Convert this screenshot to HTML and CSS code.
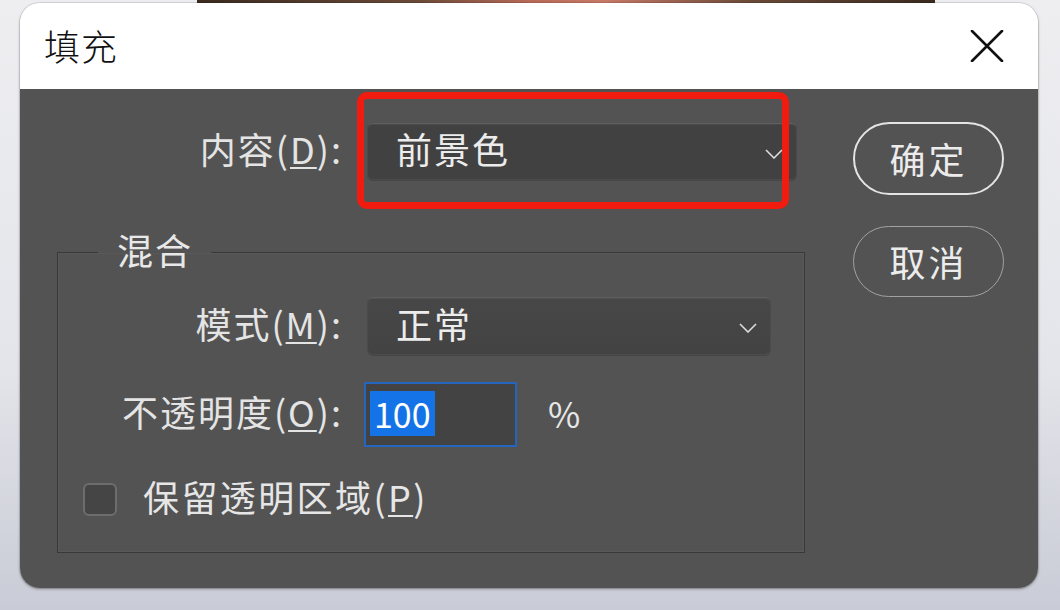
FILE: index.html
```html
<!DOCTYPE html>
<html lang="zh-CN">
<head>
<meta charset="utf-8">
<title>填充</title>
<link rel="stylesheet" href="styles.css">
</head>
<body>
<div class="strip"></div>
<div class="dialog">
  <div class="titlebar">
    <span class="title">填充</span>
    <svg class="close" width="34" height="32" viewBox="0 0 34 32" aria-label="关闭">
      <path d="M2 1 L32 31 M32 1 L2 31" stroke="#111" stroke-width="2.6" fill="none" stroke-linecap="round"/>
    </svg>
  </div>
  <div class="panel">
    <div class="main">
      <div class="row content-row">
        <label class="lbl lbl-content">内容(<u>D</u>):</label>
        <div class="select select-content">
          <span>前景色</span>
          <svg class="chev" width="18" height="10" viewBox="0 0 18 10"><path d="M1 1 L9 9 L17 1" stroke="#dcdcdc" stroke-width="1.6" fill="none"/></svg>
        </div>
        <div class="redbox"></div>
      </div>
      <fieldset class="group">
        <legend>混合</legend>
        <div class="row mode-row">
          <label class="lbl">模式(<u>M</u>):</label>
          <div class="select select-mode">
            <span>正常</span>
            <svg class="chev" width="18" height="10" viewBox="0 0 18 10"><path d="M1 1 L9 9 L17 1" stroke="#dcdcdc" stroke-width="1.6" fill="none"/></svg>
          </div>
        </div>
        <div class="row opacity-row">
          <label class="lbl">不透明度(<u>O</u>):</label>
          <div class="input"><span class="sel">100</span></div>
          <span class="pct">%</span>
        </div>
        <div class="row check-row">
          <span class="checkbox"></span>
          <label class="lbl-check">保留透明区域(<u>P</u>)</label>
        </div>
      </fieldset>
    </div>
    <div class="side">
      <div class="btn btn-ok">确定</div>
      <div class="btn btn-cancel">取消</div>
    </div>
  </div>
</div>
</body>
</html>
```
FILE: styles.css
```css
* { box-sizing: border-box; }
html, body { margin: 0; padding: 0; }
body {
  width: 1060px;
  height: 610px;
  overflow: hidden;
  background: linear-gradient(180deg, #eeeef1 0%, #e4e5ea 60%, #c9cbd6 100%);
  font-family: "Noto Sans CJK SC", "Noto Sans", sans-serif;
}
.strip {
  margin-left: 197px;
  width: 738px;
  height: 3px;
  background: linear-gradient(90deg, #3a2a20 0%, #6b4a38 30%, #b86a58 45%, #c87a68 55%, #6b4a38 75%, #3a2a20 100%);
}
.dialog {
  margin-left: 20px;
  width: 1018px;
  height: 585px;
  border-radius: 20px;
  overflow: hidden;
  display: flex;
  flex-direction: column;
  box-shadow: 0 1px 3px rgba(0,0,0,0.35), 0 0 0 1px rgba(0,0,0,0.08);
}
.titlebar {
  height: 86px;
  flex: none;
  background: #ffffff;
  display: flex;
  align-items: center;
  justify-content: space-between;
  padding: 0 34px 0 24px;
}
.title {
  font-size: 36px;
  font-weight: 300;
  color: #111;
  line-height: 1;
  letter-spacing: 1px;
  padding-bottom: 2px;
}
.close { display: block; }
.panel {
  flex: 1;
  background: #535353;
  display: flex;
  color: #e6e6e6;
}
.main {
  padding-left: 37px;
  width: 785px;
}
.row {
  display: flex;
  align-items: center;
}
.lbl {
  width: 285px;
  text-align: right;
  font-size: 36px;
  letter-spacing: 2px;
  line-height: 1;
  color: #e4e4e4;
  padding-bottom: 7px;
}
.lbl u, .lbl-check u {
  text-decoration-thickness: 2px;
  text-underline-offset: 3px;
}
.content-row {
  position: relative;
  margin-top: 34px;
  height: 57px;
}
.lbl-content { width: 286px; }
.select {
  display: flex;
  align-items: center;
  justify-content: space-between;
  border-radius: 6px;
  background: linear-gradient(180deg, #474747 0%, #434343 100%);
  border: 1px solid #4b4b4b;
  border-top-color: #5e5e5e;
  box-shadow: inset 0 1px 0 rgba(255,255,255,0.05), 0 1px 0 rgba(0,0,0,0.15);
  padding: 0 13px 0 28px;
  font-size: 36px;
  letter-spacing: 2px;
  color: #ececec;
}
.select span { line-height: 1; padding-bottom: 7px; }
.select-content {
  margin-left: 24px;
  width: 430px;
  height: 57px;
  background: #414141;
}
.select-mode {
  margin-left: 24px;
  width: 404px;
  height: 58px;
}
.chev { display: block; margin-top: 4px; }
.redbox {
  position: absolute;
  left: 300px;
  top: -31px;
  width: 432px;
  height: 117px;
  border: 7px solid #f21b10;
  border-radius: 10px;
}
.group {
  margin: 49px 0 0 0;
  width: 748px;
  height: 324px;
  padding: 0;
  border: 1px solid #393939;
  box-shadow: inset 0 0 0 1px rgba(255,255,255,0.03);
}
.group legend {
  margin-left: 40px;
  padding: 0 18px 0 19px;
  font-size: 36px;
  letter-spacing: 2px;
  line-height: 40px;
  height: 46px;
  color: #e8e8e8;
}
.mode-row { margin-top: 22px; }
.opacity-row { margin-top: 27px; }
.input {
  margin-left: 21px;
  width: 153px;
  height: 65px;
  background: #434343;
  border: 2px solid #2465bf;
  padding: 7px 0 0 4px;
}
.sel {
  display: inline-block;
  background: #1473e6;
  color: #ffffff;
  font-size: 34px;
  line-height: 45px;
  height: 45px;
  padding: 0 4px;
}
.pct {
  margin-left: 31px;
  font-size: 35px;
  color: #e6e6e6;
  line-height: 1;
  padding-bottom: 4px;
}
.check-row { margin-top: 31px; }
.checkbox {
  margin-left: 25px;
  width: 34px;
  height: 33px;
  border-radius: 6px;
  border: 2px solid #6d6d6d;
  background: #454545;
}
.lbl-check {
  margin-left: 26px;
  font-size: 36px;
  letter-spacing: 2.4px;
  line-height: 1;
  color: #e6e6e6;
  padding-bottom: 7px;
}
.side {
  margin-left: auto;
  padding: 33px 34px 0 0;
  display: flex;
  flex-direction: column;
  gap: 31px;
}
.btn {
  width: 151px;
  display: flex;
  align-items: center;
  justify-content: center;
  border-radius: 40px;
  font-size: 36px;
  letter-spacing: 3px;
  color: #ececec;
  line-height: 1;
  padding-bottom: 2px;
}
.btn-ok {
  height: 73px;
  border: 2px solid #e4e4e4;
}
.btn-cancel {
  height: 71px;
  border: 1.5px solid #a2a2a2;
}
```
